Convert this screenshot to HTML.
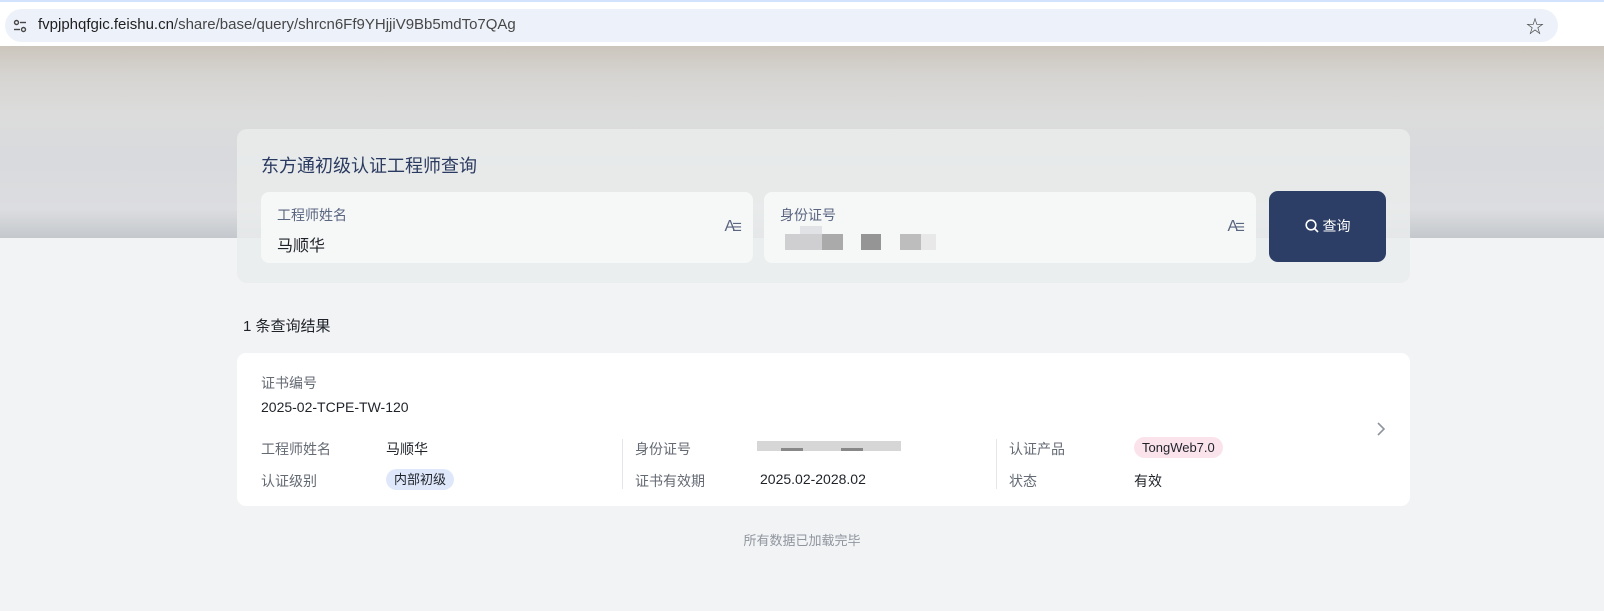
<!DOCTYPE html>
<html><head><meta charset="utf-8"><style>
*{box-sizing:border-box;margin:0;padding:0}
body{width:1604px;height:611px;overflow:hidden;background:#f2f3f5;font-family:"Liberation Sans","Noto Sans CJK SC",sans-serif;position:relative}
.top{position:absolute;left:0;top:0;width:1604px;height:46px;background:#fff;border-top:2px solid #d3e3fd}
.url{position:absolute;left:5px;top:7px;width:1553px;height:33px;background:#edf2fa;border-radius:17px}
.url .t{position:absolute;left:33px;top:7px;font-size:15px;color:#474747}
.url .t b{font-weight:normal;color:#1f1f1f}
.banner{position:absolute;left:0;top:46px;width:1604px;height:192px;background:linear-gradient(180deg,#cbc5bc 0%,#d6d4d1 15%,#dcdcdc 35%,#d8dadd 60%,#dcdde0 85%,#c4c8cc 100%)}
.panel{position:absolute;left:237px;top:129px;width:1173px;height:154px;border-radius:10px;background:rgba(234,236,236,0.85)}
.h1{position:absolute;left:24px;top:23px;font-size:18px;color:#2b3a60}
.inp{position:absolute;top:63px;width:492px;height:71px;background:rgba(247,248,248,0.95);border-radius:8px}
.lab{position:absolute;left:16px;top:13px;font-size:14px;color:#5a6580}
.val{position:absolute;left:16px;top:40px;font-size:16px;color:#1f2329}
.ic{position:absolute;right:14px;top:26px;font-size:16px;color:#5a6580;letter-spacing:-3px}
.ic small{font-size:11px}
.btn{position:absolute;left:1032px;top:62px;width:117px;height:71px;background:#2c3d66;border-radius:9px;color:#fff;font-size:14px;text-align:center;line-height:71px}
.cnt{position:absolute;left:243px;top:315px;font-size:15px;color:#1f2329}
.card{position:absolute;left:237px;top:353px;width:1173px;height:153px;background:#fff;border-radius:9px;font-size:14px;color:#1f2329}
.g{color:#646a73}
.a{position:absolute}
.tag{position:absolute;padding:0 8px;height:21px;line-height:21px;border-radius:11px;font-size:13px}
.sep{position:absolute;width:1px;height:50px;background:#e4e6e9;top:86px}
.pix{position:absolute;background:#c8c8c8}
</style></head><body>
<div class="top"><div class="url">
<svg style="position:absolute;left:8px;top:10px" width="14" height="14" viewBox="0 0 14 14" fill="none" stroke="#474747" stroke-width="1.4"><circle cx="3.5" cy="3.5" r="2"/><line x1="7" y1="3.5" x2="13" y2="3.5"/><line x1="1" y1="10.5" x2="7" y2="10.5"/><circle cx="10.5" cy="10.5" r="2"/></svg>
<div class="t"><b>fvpjphqfgic.feishu.cn</b>/share/base/query/shrcn6Ff9YHjjiV9Bb5mdTo7QAg</div>
<div style="position:absolute;right:14px;top:4px;font-size:18px;color:#444">☆</div>
</div></div>
<div class="banner"></div>
<div class="panel">
<div class="h1">东方通初级认证工程师查询</div>
<div class="inp" style="left:24px"><div class="lab">工程师姓名</div><div class="val">马顺华</div><div class="ic">A<small>☰</small></div></div>
<div class="inp" style="left:527px"><div class="lab">身份证号</div>
<div class="pix" style="left:21px;top:42px;width:58px;height:16px;background:#cfcfd1"></div>
<div class="pix" style="left:58px;top:42px;width:21px;height:16px;background:#aaa"></div>
<div class="pix" style="left:36px;top:34px;width:22px;height:8px;background:#e1e2e5"></div>
<div class="pix" style="left:97px;top:42px;width:20px;height:16px;background:#959595"></div>
<div class="pix" style="left:136px;top:42px;width:36px;height:16px;background:#bdbdbd"></div>
<div class="pix" style="left:157px;top:42px;width:15px;height:16px;background:#e8e8e8"></div>
<div class="ic">A<small>☰</small></div></div>
<div class="btn"><svg width="14" height="14" viewBox="0 0 14 14" fill="none" stroke="#fff" stroke-width="1.6" style="vertical-align:-2px;margin-right:4px"><circle cx="6" cy="6" r="4.8"/><line x1="9.5" y1="9.5" x2="13" y2="13"/></svg>查询</div>
</div>
<div class="cnt">1 条查询结果</div>
<div class="card">
<div class="a g" style="left:24px;top:20px">证书编号</div>
<div class="a" style="left:24px;top:46px">2025-02-TCPE-TW-120</div>
<div class="a g" style="left:24px;top:86px">工程师姓名</div>
<div class="a" style="left:149px;top:86px">马顺华</div>
<div class="a g" style="left:24px;top:118px">认证级别</div>
<div class="tag" style="left:149px;top:116px;background:#dfe8fb">内部初级</div>
<div class="sep" style="left:385px"></div>
<div class="a g" style="left:398px;top:86px">身份证号</div>
<div class="pix" style="left:520px;top:88px;width:144px;height:10px;background:#d6d6d6"></div>
<div class="pix" style="left:544px;top:95px;width:22px;height:3px;background:#888"></div>
<div class="pix" style="left:604px;top:95px;width:22px;height:3px;background:#888"></div>
<div class="a g" style="left:398px;top:118px">证书有效期</div>
<div class="a" style="left:523px;top:118px">2025.02-2028.02</div>
<div class="sep" style="left:759px"></div>
<div class="a g" style="left:772px;top:86px">认证产品</div>
<div class="tag" style="left:897px;top:84px;background:#fbe3ec">TongWeb7.0</div>
<div class="a g" style="left:772px;top:118px">状态</div>
<div class="a" style="left:897px;top:118px">有效</div>
<svg class="a" style="left:1139px;top:69px" width="10" height="14" viewBox="0 0 10 14" fill="none" stroke="#8f959e" stroke-width="1.6"><polyline points="2,1 8,7 2,13"/></svg>
</div>
<div class="a" style="left:0;width:1604px;top:530px;text-align:center;font-size:13px;color:#8f959e">所有数据已加载完毕</div>
</body></html>
